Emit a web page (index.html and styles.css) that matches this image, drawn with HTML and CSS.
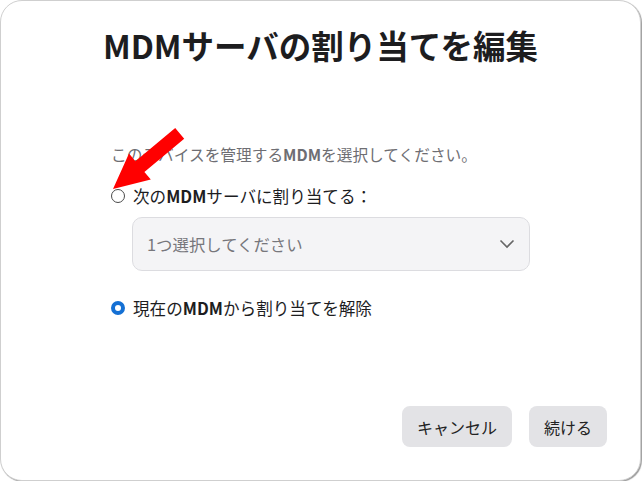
FILE: index.html
```html
<!DOCTYPE html>
<html lang="ja">
<head>
  <meta charset="UTF-8" />
  <meta name="viewport" content="width=device-width, initial-scale=1.0" />
  <title>MDMサーバの割り当てを編集</title>
  <link rel="stylesheet" href="styles.css">
</head>
<body>
  <div class="dialog">
    <h1 class="title">MDMサーバの割り当てを編集</h1>

    <div class="content">
      <p class="lead">このデバイスを管理する<span class="latin">MDM</span>を選択してください。</p>

      <label class="option">
        <span class="radio"></span>
        <span>次の<span class="latin">MDM</span>サーバに割り当てる：</span>
      </label>

      <div class="select">
        <span>1つ選択してください</span>
        <svg class="chevron" width="16" height="10" viewBox="0 0 16 10">
          <polyline points="1.5,1.5 8,8 14.5,1.5" fill="none" stroke="#666" stroke-width="1.6" />
        </svg>
      </div>

      <label class="option checked">
        <span class="radio"></span>
        <span>現在の<span class="latin">MDM</span>から割り当てを解除</span>
      </label>
    </div>

    <div class="actions">
      <button class="btn">キャンセル</button>
      <button class="btn">続ける</button>
    </div>

    <!-- red annotation arrow -->
    <svg class="arrow" width="642" height="482" viewBox="0 0 642 482">
      <polygon fill="#ff0000" points="113,189 150.8,179.6 144.4,172 184.2,138.7 175.2,127.9 135.4,161.2 129,153.6" />
    </svg>
  </div>
</body>
</html>
```

FILE: styles.css
```css
body {
  margin: 0;
  padding: 0;
  background: #ffffff;
  font-family: "Noto Sans CJK JP", "Noto Sans", sans-serif;
  color: #222;
}

.dialog {
  position: relative;
  box-sizing: border-box;
  width: 641px;
  height: 481px;
  border: 1px solid #cfcfcf;
  border-radius: 22px;
  box-shadow: 1px 1px 1px #9a9a9a;
  background: #fff;
  display: flex;
  flex-direction: column;
  overflow: hidden;
}

.title {
  margin: 24px 0 0;
  font-size: 32.5px;
  line-height: 40px;
  font-weight: 700;
  text-align: center;
  color: #1d1d1f;
}

.content {
  padding: 0 110px;
  display: flex;
  flex-direction: column;
}

.lead {
  margin: 80px 0 0;
  font-size: 15.7px;
  line-height: 20px;
  color: #6e6e73;
}

.latin {
  font-weight: 600;
}

.option {
  display: flex;
  align-items: center;
  gap: 7px;
  margin-top: 21px;
  font-size: 16.6px;
  line-height: 20px;
  color: #1d1d1f;
}

.radio {
  box-sizing: border-box;
  width: 14px;
  height: 14px;
  border: 1.6px solid #4a4a4a;
  border-radius: 50%;
  margin-left: 0;
  margin-right: 1px;
}

.option.checked {
  margin-top: 27px;
}

.option.checked .radio {
  border: 4.5px solid #1470d4;
  background: #fff;
}

.select {
  box-sizing: border-box;
  margin: 11px 0 0 21px;
  height: 54px;
  border: 1px solid #dcdce0;
  border-radius: 10px;
  background: #f4f4f6;
  display: flex;
  align-items: center;
  justify-content: space-between;
  padding: 0 14px 0 14px;
  font-size: 16.4px;
  color: #77777c;
}

.actions {
  margin-top: auto;
  display: flex;
  justify-content: flex-end;
  gap: 17px;
  padding: 0 33px 33px 0;
}

.btn {
  height: 41px;
  padding: 0 15px;
  border: none;
  border-radius: 8px;
  background: #e3e3e6;
  font-family: inherit;
  font-size: 16px;
  color: #222;
  cursor: pointer;
}

.arrow {
  position: absolute;
  top: -1px;
  left: -1px;
  pointer-events: none;
}
```
